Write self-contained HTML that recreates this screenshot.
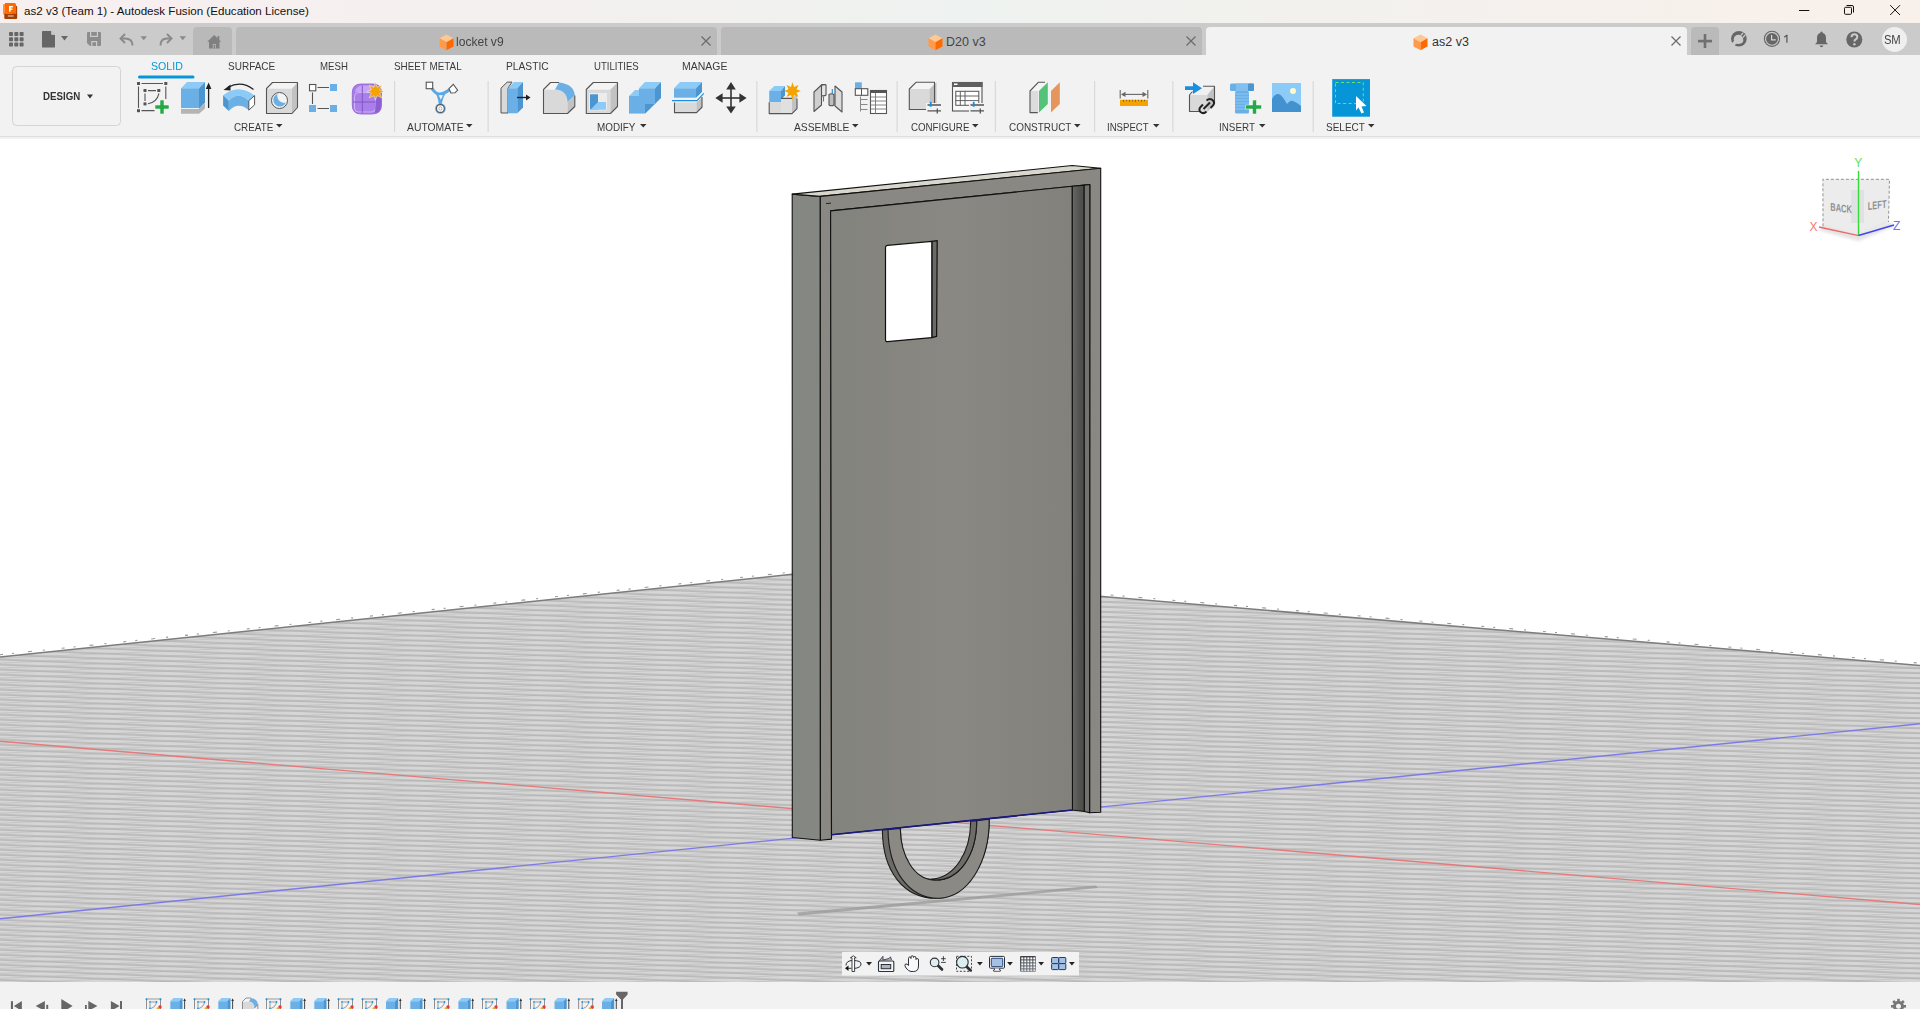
<!DOCTYPE html>
<html><head><meta charset="utf-8">
<style>
*{margin:0;padding:0;box-sizing:border-box}
html,body{width:1920px;height:1009px;overflow:hidden;background:#fff;font-family:"Liberation Sans",sans-serif}
.a{position:absolute}
#title{left:0;top:0;width:1920px;height:23px;background:linear-gradient(90deg,#f9efef 0%,#f3f0ef 30%,#eef2f0 50%,#f3f1ee 70%,#f9f0ea 100%)}
#title .t{left:24px;top:4px;font-size:11.6px;color:#111;white-space:nowrap}
#tabs{left:0;top:23px;width:1920px;height:32px;background:#cbcbcb}
.tab{top:4px;height:28px;background:#bdbdbd;border-radius:4px 4px 0 0}
.tab .tt{position:absolute;top:8px;font-size:12.5px;color:#444;white-space:nowrap}
#tb{left:0;top:55px;width:1920px;height:84px;background:#f2f2f2;border-top:0}
#tbl{left:0;top:136px;width:1920px;height:1px;background:#dedede}
.tl{position:absolute;top:5px;font-size:11px;color:#3c3c3c;white-space:nowrap;letter-spacing:0px}
.lb{position:absolute;font-size:10.8px;line-height:12px;color:#3a3a3a;white-space:nowrap;transform-origin:left top}
.gl{position:absolute;top:67px;font-size:10.5px;color:#3c3c3c;white-space:nowrap}
.sep{position:absolute;top:27px;width:1px;height:50px;background:#d6d6d6}
#vp{left:0;top:139px;width:1920px;height:844px;background:#fff;overflow:hidden}
#bot{left:0;top:982px;width:1920px;height:27px;background:#f2f2f2}
</style></head><body>
<div id="title" class="a">
  <svg class="a" style="left:0;top:0" width="20" height="22" viewBox="0 0 20 22">
    <rect x="3" y="4" width="4" height="10.6" rx="1" fill="#ff8c3c"/>
    <rect x="12" y="5.8" width="5.1" height="13" rx="0.8" fill="#b24800"/>
    <rect x="4.3" y="13.4" width="12.8" height="5.5" rx="0.8" fill="#a33f00"/>
    <path d="M5,3 H14.5 Q16,3 16,4.5 V13.7 H5 Z" fill="#ff6a00"/>
    <path d="M9,5.9 H12.9 V7.4 H10.6 V8.4 H12.5 V9.8 H10.6 V11.8 H9 Z" fill="#fff"/>
    <rect x="7.8" y="15.2" width="5.8" height="1.6" fill="#d9b8a6" opacity="0.8"/>
  </svg>
  <div class="a t">as2 v3 (Team 1) - Autodesk Fusion (Education License)</div>
  <svg class="a" style="left:1790px;top:0" width="130" height="23" viewBox="1790 0 130 23" fill="none" stroke="#111" stroke-width="1">
    <path d="M1799,10.5 H1809.3"/>
    <rect x="1844.5" y="7.3" width="7" height="7" rx="1"/>
    <path d="M1846.5,5.5 H1852 Q1853.5,5.5 1853.5,7 V12.5"/>
    <path d="M1890.2,5.2 L1900,15 M1900,5.2 L1890.2,15"/>
  </svg>
</div>
<div id="tabs" class="a">
  <svg class="a" style="left:9px;top:9px" width="15" height="15" viewBox="0 0 15 15" fill="#666">
    <rect x="0" y="0" width="4" height="4" rx="0.8"/><rect x="5.3" y="0" width="4" height="4" rx="0.8"/><rect x="10.6" y="0" width="4" height="4" rx="0.8"/>
    <rect x="0" y="5.3" width="4" height="4" rx="0.8"/><rect x="5.3" y="5.3" width="4" height="4" rx="0.8"/><rect x="10.6" y="5.3" width="4" height="4" rx="0.8"/>
    <rect x="0" y="10.6" width="4" height="4" rx="0.8"/><rect x="5.3" y="10.6" width="4" height="4" rx="0.8"/><rect x="10.6" y="10.6" width="4" height="4" rx="0.8"/>
  </svg>
  <svg class="a" style="left:42px;top:8px" width="28" height="17" viewBox="0 0 28 17">
    <path d="M0.8,0 H9.5 L13,3.5 V15.7 Q13,16.6 12.1,16.6 H0.9 Q0,16.6 0,15.7 V0.9 Q0,0 0.8,0 Z" fill="#666"/>
    <path d="M9.8,0 L13,3.2 H9.8 Z" fill="#cbcbcb"/>
    <path d="M9.6,-0.5 V3.4 H13.5" fill="none" stroke="#cbcbcb" stroke-width="0.9"/>
    <path d="M19,5 H26 L22.5,9.5 Z" fill="#666"/>
  </svg>
  <svg class="a" style="left:87px;top:9px" width="15" height="15" viewBox="0 0 15 15">
    <path d="M1,0 H13 Q14,0 14,1 V13 Q14,14 13,14 H3 L0,11 V1 Q0,0 1,0 Z" fill="#8c8c8c"/>
    <rect x="3" y="0" width="8" height="5" fill="#cbcbcb"/>
    <rect x="4.2" y="-1" width="5.6" height="4.8" fill="#8c8c8c"/>
    <rect x="4.2" y="9" width="6" height="5" fill="#cbcbcb"/>
    <rect x="5.4" y="10.2" width="3.6" height="3.8" fill="#8c8c8c"/>
  </svg>
  <svg class="a" style="left:119px;top:10px" width="70" height="14" viewBox="0 0 70 14" fill="none" stroke="#8a8a8a" stroke-width="1.9">
    <path d="M6,1 L1.5,5.5 L6,10"/><path d="M1.8,5.5 H6 Q13.5,5.5 13.5,12.5"/>
    <path d="M21.5,3.3 H28 L24.75,7.3 Z" fill="#8a8a8a" stroke="none"/>
    <path d="M48,1 L52.5,5.5 L48,10"/><path d="M52.2,5.5 H48 Q41.5,5.5 41.5,12.5"/>
    <path d="M60.5,3.3 H67 L63.75,7.3 Z" fill="#8a8a8a" stroke="none"/>
  </svg>
  <div class="tab a" style="left:193px;width:39px;background:#b9b9b9">
    <svg class="a" style="left:14px;top:8px" width="15" height="14" viewBox="0 0 15 14" fill="#808080">
      <path d="M7.2,0 L14.2,6.8 H12.5 V13.5 H2 V6.8 H0.2 Z"/><rect x="10.5" y="1" width="1.8" height="4"/>
      <rect x="5.8" y="9" width="3" height="4.5" fill="#b9b9b9"/><rect x="6.6" y="9.8" width="1.4" height="3.7" fill="#808080"/>
    </svg>
  </div>
  <div class="tab a" style="left:236px;width:481px;background:#bababa">
    <svg class="a" style="left:203px;top:7px" width="15" height="17" viewBox="0 0 15 17">
      <path d="M7.5,0.5 L14.5,4.3 L7.5,8.2 L0.5,4.3 Z" fill="#ffc793"/>
      <path d="M0.5,4.3 L7.5,8.2 V16.2 L0.5,12.4 Z" fill="#ff9a4a"/>
      <path d="M14.5,4.3 L7.5,8.2 V16.2 L14.5,12.4 Z" fill="#ff6a00"/>
    </svg>
    <div class="tt" style="left:220px;transform:scaleX(0.965);transform-origin:left">locket v9</div>
    <svg class="a" style="left:465px;top:9px" width="10" height="10" viewBox="0 0 10 10" stroke="#6a6a6a" stroke-width="1.2"><path d="M0.5,0.5 L9.5,9.5 M9.5,0.5 L0.5,9.5"/></svg>
  </div>
  <div class="tab a" style="left:721px;width:481px;background:#bababa">
    <svg class="a" style="left:207px;top:7px" width="15" height="17" viewBox="0 0 15 17">
      <path d="M7.5,0.5 L14.5,4.3 L7.5,8.2 L0.5,4.3 Z" fill="#ffc793"/>
      <path d="M0.5,4.3 L7.5,8.2 V16.2 L0.5,12.4 Z" fill="#ff9a4a"/>
      <path d="M14.5,4.3 L7.5,8.2 V16.2 L14.5,12.4 Z" fill="#ff6a00"/>
    </svg>
    <div class="tt" style="left:225px">D20 v3</div>
    <svg class="a" style="left:465px;top:9px" width="10" height="10" viewBox="0 0 10 10" stroke="#6a6a6a" stroke-width="1.2"><path d="M0.5,0.5 L9.5,9.5 M9.5,0.5 L0.5,9.5"/></svg>
  </div>
  <div class="tab a" style="left:1206px;width:481px;background:#f2f2f2">
    <svg class="a" style="left:207px;top:7px" width="15" height="17" viewBox="0 0 15 17">
      <path d="M7.5,0.5 L14.5,4.3 L7.5,8.2 L0.5,4.3 Z" fill="#ffc793"/>
      <path d="M0.5,4.3 L7.5,8.2 V16.2 L0.5,12.4 Z" fill="#ff9a4a"/>
      <path d="M14.5,4.3 L7.5,8.2 V16.2 L14.5,12.4 Z" fill="#ff6a00"/>
    </svg>
    <div class="tt" style="left:226px;color:#333">as2 v3</div>
    <svg class="a" style="left:465px;top:9px" width="10" height="10" viewBox="0 0 10 10" stroke="#6a6a6a" stroke-width="1.2"><path d="M0.5,0.5 L9.5,9.5 M9.5,0.5 L0.5,9.5"/></svg>
  </div>
  <div class="tab a" style="left:1691px;width:28px;background:#bababa">
    <svg class="a" style="left:7px;top:7px" width="14" height="14" viewBox="0 0 14 14" fill="#707070"><rect x="0" y="5.8" width="14" height="2.6"/><rect x="5.7" y="0" width="2.6" height="14"/></svg>
  </div>
  <svg class="a" style="left:1730px;top:7px" width="18" height="18" viewBox="1730 30 18 18">
    <circle cx="1738.9" cy="38.8" r="7.8" fill="#666"/>
    <circle cx="1738.3" cy="39.4" r="4.6" fill="#cbcbcb"/>
    <path d="M1736.5,38.5 L1731,44 L1733.5,46.5 L1739,41 Z" fill="#cbcbcb"/>
    <path d="M1740.6,35.6 L1743,33 M1742.6,37.6 L1745.2,35" stroke="#cbcbcb" stroke-width="1.3"/>
    <path d="M1735,37 Q1737,34.5 1740,35.5 L1743,38.5 Q1744,41.5 1741.5,43.5 Z" fill="#cbcbcb"/>
  </svg>
  <svg class="a" style="left:1763px;top:7px" width="18" height="18" viewBox="1763 30 18 18">
    <circle cx="1772" cy="38.8" r="7.6" fill="none" stroke="#666" stroke-width="1.1"/>
    <circle cx="1772" cy="38.8" r="5.9" fill="#666"/>
    <path d="M1771.6,35 V39.9 H1775.8" fill="none" stroke="#d6d6d6" stroke-width="1.2"/>
  </svg>
  <svg class="a" style="left:1782px;top:10px" width="8" height="10" viewBox="1782 33 8 10"><path d="M1786.9,34.9 V42.8" stroke="#555" stroke-width="1.2"/><path d="M1784.2,37.3 L1787.2,35" stroke="#555" stroke-width="1.1"/></svg>
  <svg class="a" style="left:1814px;top:8px" width="15" height="17" viewBox="0 0 15 17" fill="#666">
    <path d="M7.5,0.5 C8.5,0.5 8.7,1.5 8.7,2 C11.5,2.8 12,5 12,7.5 V11 L14,13.3 H1 L3,11 V7.5 C3,5 3.5,2.8 6.3,2 C6.3,1.5 6.5,0.5 7.5,0.5 Z"/>
    <path d="M5.5,14.5 H9.5 Q9,16.3 7.5,16.3 Q6,16.3 5.5,14.5 Z"/>
  </svg>
  <svg class="a" style="left:1846px;top:8px" width="17" height="17" viewBox="0 0 17 17">
    <circle cx="8.3" cy="8.5" r="8" fill="#666"/>
    <path d="M5.5,6.2 Q5.5,3.3 8.4,3.3 Q11.3,3.3 11.3,6 Q11.3,7.6 9.5,8.5 Q8.4,9.1 8.4,10.5" fill="none" stroke="#cbcbcb" stroke-width="2"/>
    <circle cx="8.4" cy="13.2" r="1.2" fill="#cbcbcb"/>
  </svg>
  <div class="a" style="left:1882px;top:3.5px;width:25px;height:25px;border-radius:50%;background:#efefef"></div>
  <div class="a" style="left:1884.3px;top:10px;font-size:12.5px;color:#444;letter-spacing:-0.3px;transform:scaleX(0.9);transform-origin:left">SM</div>
</div>

<div id="tb" class="a">
<svg class="a" style="left:0;top:0" width="1400" height="82" viewBox="0 55 1400 82">
<defs>
<linearGradient id="frm" x1="0" y1="0" x2="1" y2="1"><stop offset="0" stop-color="#c8a6f6"/><stop offset="1" stop-color="#9b6ee0"/></linearGradient>
</defs>
<!-- SOLID underline -->
<rect x="138" y="75.5" width="56.5" height="3" rx="1.5" fill="#0696d7"/>
<!-- design box -->
<rect x="12.5" y="66.5" width="108" height="59" rx="4" fill="#f2f2f2" stroke="#d4d4d4" stroke-width="1"/>
<!-- separators -->
<g fill="#d9d9d9">
<rect x="394" y="81" width="1.2" height="51"/><rect x="487.5" y="81" width="1.2" height="51"/><rect x="756.3" y="81" width="1.2" height="51"/>
<rect x="896.5" y="81" width="1.2" height="51"/><rect x="994.8" y="81" width="1.2" height="51"/><rect x="1094" y="81" width="1.2" height="51"/>
<rect x="1172.3" y="81" width="1.2" height="51"/><rect x="1312.6" y="81" width="1.2" height="51"/>
</g>
<!-- 1 sketch -->
<g>
<g stroke="#555" stroke-width="1.1" fill="none">
<path d="M141.5,83.5 H163 M138.5,86.5 V108 M165.8,86.5 V99 M141.5,110.6 H154.5"/>
<path d="M148,90.6 H156 M145,93.5 V101 M148,103.8 Q157,102 159,93.3"/>
</g>
<g fill="#555">
<rect x="137" y="82" width="3" height="3"/><rect x="164.3" y="82" width="3" height="3"/><rect x="137" y="109.2" width="3" height="3"/>
<rect x="143.5" y="89" width="3" height="3"/><rect x="157.3" y="89" width="3" height="3"/><rect x="143.5" y="102.4" width="3" height="3"/>
</g>
<path d="M160,100 H164 V105 H169 V109 H164 V114 H160 V109 H155 V105 H160 Z" fill="#22aa44" stroke="#f2f2f2" stroke-width="0.6"/>
</g>
<!-- 2 extrude -->
<g>
<polygon points="181,108.5 199,108.5 205,103 205,108.5 199,113.8 181,113.8" fill="#b4b4b4"/>
<polygon points="181,88.2 199,88.2 199,108.5 181,108.5" fill="#6ab0e6"/>
<polygon points="181,88.2 187,82 205,82 199,88.2" fill="#8ccbf8"/>
<polygon points="199,88.2 205,82 205,102.5 199,108.5" fill="#4b95d1"/>
<line x1="181" y1="108.5" x2="199" y2="108.5" stroke="#fff" stroke-width="0.8"/>
<path d="M208.6,108 V86" stroke="#222" stroke-width="1.3"/>
<path d="M205.8,89 L208.6,82.6 L211.4,89 Z" fill="#222"/>
</g>
<!-- 3 revolve -->
<g>
<path d="M253.5,89.5 Q241,80 228,87.5" fill="none" stroke="#222" stroke-width="1.2"/>
<path d="M223.5,90 L230.5,84.5 L230.5,90.5 Z" fill="#222"/>
<path d="M223.1,95.3 Q238,83 254.6,95.5 L248.8,100.7 Q238,91 228.8,100.8 Z" fill="#8ccbf8"/>
<path d="M228.8,100.8 Q238,91 248.8,100.7 L248.8,110 Q238,101 228.8,110.9 Z" fill="#6ab0e6"/>
<path d="M223.1,95.3 L228.8,100.8 L228.8,110.9 L223.1,105.5 Z" fill="#4b95d1"/>
<path d="M248.8,100.7 L254.6,95.6 L254.6,104.8 L248.8,110.2 Z" fill="#fff" stroke="#555" stroke-width="1"/>
</g>
<!-- 4 hole -->
<g stroke-linejoin="round">
<polygon points="266.5,88.5 292,88.5 292,113.5 266.5,113.5" fill="#d9d9d9"/>
<polygon points="266.5,88.5 272.5,82.5 297.5,82.5 292,88.5" fill="#f4f4f4"/>
<polygon points="292,88.5 297.5,82.5 297.5,107.5 292,113.5" fill="#c2c2c2"/>
<polygon points="266.5,88.5 272.5,82.5 297.5,82.5 297.5,107.5 292,113.5 266.5,113.5" fill="none" stroke="#555" stroke-width="1.1"/>
<circle cx="279.5" cy="100.5" r="8" fill="#f4f4f4" stroke="#555" stroke-width="1"/>
<path d="M277.5,94 A6.5,6.5 0 1 0 285.8,102.6 A7,7 0 0 1 277.5,94 Z" fill="#6ab0e6"/>
</g>
<!-- 5 pattern -->
<g>
<rect x="309.5" y="84.5" width="6.3" height="6.3" fill="#fff" stroke="#555" stroke-width="1.1"/>
<rect x="330" y="84" width="7" height="7" fill="#6ab0e6"/><rect x="309" y="105" width="7" height="7" fill="#6ab0e6"/><rect x="330" y="105" width="7" height="7" fill="#6ab0e6"/>
<path d="M317.5,87.5 H329 M312.5,92.5 V104 M317.5,108.5 H329" stroke="#555" stroke-width="1.1"/>
</g>
<!-- 6 form -->
<g>
<path d="M361,84 H373 Q381.5,84 381.5,93 V105 Q381.5,114 372,114 H361 Q352.3,114 352.3,105 V93 Q352.3,84 361,84 Z" fill="#a77be8" stroke="#9566da" stroke-width="0.9"/>
<path d="M355,92 Q356,86 362,85.5 H373 Q379,86 380,92 Z" fill="#c6a3f6"/>
<rect x="354.5" y="92.5" width="21" height="19.5" rx="4" fill="#aa7fea" stroke="#cdb4f4" stroke-width="1"/>
<path d="M376,93 Q381,94 381,100 V105 Q381,112 375,113 Z" fill="#8d5fd3"/>
<path d="M353,102 H375.5 M362.3,85.5 V113" stroke="#7c55c0" stroke-width="0.9"/>
<path d="M375.5,82 L377,87.3 L381.8,85.2 L379.6,89.8 L384,91.5 L379.6,93.2 L381.8,97.8 L377,95.7 L375.5,100 L374,95.7 L369.2,97.8 L371.4,93.2 L367,91.5 L371.4,89.8 L369.2,85.2 L374,87.3 Z" fill="#f4a300" stroke="#f2f2f2" stroke-width="0.5"/>
</g>
<!-- 7 automate -->
<g>
<path d="M431,87 Q435,93.5 438.5,94 Q443,94.5 450,89.5" fill="none" stroke="#5aa9e6" stroke-width="3"/>
<path d="M437,93 Q439,97 440.4,105 M444.5,93 Q441.5,97 440.4,105" fill="none" stroke="#5aa9e6" stroke-width="2.6"/>
<path d="M438.9,95.2 H443 L440.8,99.8 Z" fill="#f2f2f2"/>
<rect x="426.2" y="82.2" width="6.5" height="6.5" fill="#fff" stroke="#555" stroke-width="1.1"/>
<path d="M453.3,84.3 L457.6,90.3 L455,92.7 L450.9,93 L449,88.7 Z" fill="#fff" stroke="#555" stroke-width="1.1"/>
<circle cx="440.4" cy="108.5" r="5.3" fill="#5aa9e6"/>
<circle cx="440.4" cy="108.5" r="3.9" fill="#fff" stroke="#555" stroke-width="1.1"/>
<circle cx="440.4" cy="108.5" r="1.6" fill="none" stroke="#888" stroke-width="0.6"/>
</g>
<!-- 8 press pull -->
<g>
<polygon points="501,88.2 507.2,82.1 512,82.1 508,88.2 508,113 501,113" fill="#d9d9d9" stroke="#555" stroke-width="1"/>
<polygon points="508,88.2 517.3,88.2 517.3,113.3 508,113.3" fill="#6ab0e6"/>
<polygon points="508,88.2 514,82.1 523,82.1 517.3,88.2" fill="#8ccbf8"/>
<polygon points="517.3,88.2 523,82.1 523,107.5 517.3,113.3" fill="#4b95d1"/>
<path d="M517,97.5 H527" stroke="#222" stroke-width="1.4"/><path d="M526,94.5 L530.5,97.5 L526,100.5 Z" fill="#222"/>
</g>
<!-- 9 fillet -->
<g stroke-linejoin="round">
<path d="M543.5,89.5 H555 Q567.5,90 567.5,102 V113.5 H543.5 Z" fill="#d9d9d9"/>
<path d="M543.5,89.5 L550.5,82.5 H559 L555,89.5 Z" fill="#f4f4f4"/>
<path d="M555,89.5 L559,82.5 Q574,84 574.8,95.5 L567.5,102 Q567,90 555,89.5 Z" fill="#6ab0e6"/>
<path d="M567.5,102 L574.8,95.5 V106.5 L567.5,113.5 Z" fill="#c2c2c2"/>
<path d="M559,82.5 H550.5 L543.5,89.5 V113.5 H567.5 L574.8,106.5 V95.5" fill="none" stroke="#555" stroke-width="1.1"/>
</g>
<!-- 10 shell -->
<g stroke-linejoin="round">
<polygon points="586.3,89.5 610.5,89.5 610.5,113.5 586.3,113.5" fill="#d9d9d9"/>
<polygon points="586.3,89.5 593.3,82.5 617.5,82.5 610.5,89.5" fill="#f4f4f4"/>
<polygon points="610.5,89.5 617.5,82.5 617.5,106.5 610.5,113.5" fill="#c2c2c2"/>
<polygon points="586.3,89.5 593.3,82.5 617.5,82.5 617.5,106.5 610.5,113.5 586.3,113.5" fill="none" stroke="#555" stroke-width="1.1"/>
<rect x="589" y="93" width="18" height="17.5" fill="#ececec"/>
<rect x="590" y="94.3" width="8" height="15.2" fill="#4b95d1"/>
<path d="M590.4,109.8 L598,102 H606 V109.8 Z" fill="#8ccbf8"/>
</g>
<!-- 11 combine -->
<g>
<polygon points="629,96 645,96 645,113.6 629,113.6" fill="#6ab0e6"/>
<polygon points="629,96 635,90 651,90 645,96" fill="#8ccbf8"/>
<polygon points="639,88.2 655,88.2 655,104 639,104" fill="#6ab0e6"/>
<polygon points="639,88.2 645,82.1 661,82.1 655,88.2" fill="#8ccbf8"/>
<polygon points="655,88.2 661,82.1 661,98 655,104" fill="#4b95d1"/>
<polygon points="645,104 655,104 645,113.6" fill="#4b95d1"/>
<polygon points="645,104 651,104 651,107.5 645,113.6" fill="#4b95d1"/>
</g>
<!-- 12 split -->
<g>
<polygon points="674,88.2 696,88.2 696,97.7 674,97.7" fill="#6ab0e6"/>
<polygon points="674,88.2 680,82.1 702,82.1 696,88.2" fill="#8ccbf8"/>
<polygon points="696,88.2 702,82.1 702,92 696,97.7" fill="#4b95d1"/>
<path d="M672,100.6 H697 L703.8,93.3" fill="none" stroke="#1a8fe0" stroke-width="1.1"/>
<polygon points="674.5,102.5 696.5,102.5 696.5,112.6 674.5,112.6" fill="#d9d9d9"/>
<polygon points="696.5,102.5 702,97 702,107.2 696.5,112.6" fill="#c2c2c2"/>
<path d="M674.5,102.5 V112.6 H696.5 L702,107.2 V97" fill="none" stroke="#555" stroke-width="1.1"/>
</g>
<!-- 13 move -->
<g fill="#333">
<rect x="730.2" y="88" width="1.6" height="20"/><rect x="721" y="97.2" width="20" height="1.6"/>
<path d="M726.2,89.6 L731,82.1 L735.8,89.6 Z M726.2,106.4 L731,113.6 L735.8,106.4 Z M722.6,93.2 L715.3,98 L722.6,102.8 Z M739.4,93.2 L746.6,98 L739.4,102.8 Z"/>
</g>
<!-- 14 new component -->
<g stroke-linejoin="round">
<polygon points="769.2,91 781,91 781,102.2 769.2,102.2" fill="#6ab0e6"/>
<polygon points="769.2,91 774.3,86 785,86 781,91" fill="#8ccbf8"/>
<polygon points="781,91 785,86 785,98 781,102.2" fill="#4b95d1"/>
<polygon points="769.2,102.2 781,102.2 781,113.6 769.2,113.6" fill="#d9d9d9"/>
<polygon points="782,98.4 787,93.6 797,93.6 792,98.4" fill="#f4f4f4"/>
<polygon points="781,98.4 792,98.4 792,113.6 781,113.6" fill="#e0e0e0"/>
<polygon points="792,98.4 797,93.6 797,108.6 792,113.6" fill="#c2c2c2"/>
<path d="M769.2,102.2 V113.6 H792 L797,108.6 V98.5 M781,98.4 H792" fill="none" stroke="#555" stroke-width="1.1"/>
<path d="M792.5,82 L794,87 L798.5,85 L796.5,89.3 L800.8,91 L796.5,92.7 L798.5,97 L794,95 L792.5,100 L791,95 L786.5,97 L788.5,92.7 L784.2,91 L788.5,89.3 L786.5,85 L791,87 Z" fill="#f4a300"/>
</g>
<!-- 15 joint -->
<g stroke="#555" stroke-width="1.1" stroke-linejoin="round">
<path d="M814,92 L822,84.5 H825.5 V95 L821.5,96 V105 L814,111.5 Z" fill="#cfcfcf"/>
<path d="M821.5,85.5 Q823.5,84 826,85 V95 Q824,96.5 821.5,95.5 Z" fill="#e6e6e6"/>
<path d="M835,86 L842,92 V112 L835,106 Z" fill="#dcdcdc"/>
<path d="M829,94.5 Q831.5,93 834,94.5 V105 Q831.5,106.5 829,105 Z" fill="#bfbfbf"/>
</g>
<path d="M823.5,96.5 V101.5 M832.3,89 V94" stroke="#1a8fe0" stroke-width="1.1"/>
<!-- 16 bom -->
<g>
<rect x="855" y="82.3" width="6.8" height="6.8" fill="#6ab0e6"/>
<rect x="855.3" y="88.7" width="12.5" height="6.6" fill="#fff" stroke="#555" stroke-width="1.1"/>
<path d="M861.5,88.7 V95.3" stroke="#555" stroke-width="1"/>
<path d="M860.5,96.5 V111.5 M860.5,99.5 H867.5 M860.5,104.5 H867.5 M860.5,109.5 H867.5" stroke="#888" stroke-width="1"/>
<rect x="870.5" y="90.5" width="16" height="23" fill="#fff" stroke="#555" stroke-width="1.1"/>
<rect x="870" y="90" width="17" height="3" fill="#555"/>
<path d="M870.5,97 H886.5 M870.5,101 H886.5 M870.5,105 H886.5 M870.5,109 H886.5 M875.5,93 V113.5" stroke="#777" stroke-width="0.9"/>
</g>
<!-- 17 configure box -->
<g stroke-linejoin="round">
<polygon points="909.3,89 929.5,89 929.5,109.5 909.3,109.5" fill="#d9d9d9"/>
<polygon points="909.3,89 916,82.3 936.5,82.3 929.5,89" fill="#f4f4f4"/>
<polygon points="929.5,89 936.5,82.3 936.5,104 929.5,109.5" fill="#c2c2c2"/>
<path d="M934.5,105 V82.3 H916 L909.3,89 V109.5 H926" fill="none" stroke="#555" stroke-width="1.1"/>
<rect x="926" y="103" width="15.5" height="11" fill="#f2f2f2"/>
<path d="M927.5,105 H941 M927.5,110.8 H941 M937.3,108.5 V113.5" stroke="#555" stroke-width="1.3"/>
<rect x="929.8" y="101.8" width="1.8" height="5" fill="#1a8fe0"/>
</g>
<!-- 18 configure table -->
<g>
<rect x="952.5" y="82.5" width="29.5" height="28.5" fill="#f8f8f8" stroke="#555" stroke-width="1.1"/>
<rect x="952" y="82" width="30.5" height="5" fill="#5f5f5f"/>
<rect x="954" y="83.5" width="3.5" height="1.5" fill="#fff"/>
<rect x="955.8" y="91.3" width="23" height="14" fill="#fff" stroke="#555" stroke-width="1"/>
<path d="M960.3,91.3 V105.3 M965,91.3 V105.3 M955.8,96 H978.8 M955.8,100.6 H978.8" stroke="#555" stroke-width="0.9"/>
<rect x="969" y="103" width="15.5" height="11" fill="#f2f2f2"/>
<path d="M970.5,105 H984 M970.5,110.8 H984 M980.3,108.5 V113.5" stroke="#555" stroke-width="1.3"/>
<rect x="972.8" y="101.8" width="1.8" height="5" fill="#1a8fe0"/>
</g>
<!-- 19 construct -->
<g stroke-linejoin="round">
<polygon points="1030,91 1038.3,91 1038.3,112.6 1030,112.6" fill="#dcdcdc"/>
<polygon points="1030,91 1038.5,82.2 1045,82.2 1038.3,91" fill="#f4f4f4"/>
<path d="M1045,82.2 H1038.5 L1030,91 V112.6 H1037.8" fill="none" stroke="#555" stroke-width="1.1"/>
<polygon points="1039,91 1047.8,82.2 1047.8,104 1039,112.6" fill="#55c27a"/>
<polygon points="1051,91 1059.8,82.2 1059.8,104 1051,112.6" fill="#e3965e"/>
</g>
<!-- 20 inspect -->
<g>
<path d="M1120.2,90 V98.4 M1147.8,90 V98.4" stroke="#666" stroke-width="1.1"/>
<path d="M1122,94.4 H1146" stroke="#666" stroke-width="1.1"/>
<path d="M1121,94.4 L1125.5,91.8 V97 Z M1147,94.4 L1142.5,91.8 V97 Z" fill="#666"/>
<rect x="1120" y="99.8" width="28" height="6.2" fill="#f5a300"/>
<path d="M1123.5,99.8 V102 M1126.5,99.8 V101.3 M1129.5,99.8 V102 M1132.5,99.8 V101.3 M1135.5,99.8 V102 M1138.5,99.8 V101.3 M1141.5,99.8 V102 M1144.5,99.8 V101.3" stroke="#6b5a2a" stroke-width="0.8"/>
</g>
<!-- 21 insert derive -->
<g stroke-linejoin="round">
<polygon points="1189.5,95 1207.3,95 1207.3,112 1189.5,112" fill="#d9d9d9"/>
<polygon points="1189.5,95 1196,86.3 1214.5,86.3 1207.3,95" fill="#f0f0f0"/>
<polygon points="1207.3,95 1214.5,86.3 1214.5,104 1207.3,112" fill="#c2c2c2"/>
<path d="M1192.5,91.5 L1189.5,95 V111.5 H1200 M1203,86.3 H1214.5 V103" fill="none" stroke="#555" stroke-width="1.1"/>
<path d="M1185,86.3 H1193 V82.2 L1202,88.2 L1193,94 V90 H1185 Z" fill="#1a8fe0"/>
<path d="M1206.5,100.5 Q1210,97.5 1213,100.5 Q1215.5,103 1212.5,106 L1210.5,108 M1203,104.5 L1201,106.5 Q1198,109.5 1200.5,112 Q1203.5,114.5 1206.5,111.5 M1203.5,109 L1210,102.5" fill="none" stroke="#222" stroke-width="2"/>
</g>
<!-- 22 bolt -->
<g>
<rect x="1230" y="83.5" width="24" height="7.5" rx="1.5" fill="#6ab0e6"/>
<rect x="1236" y="83.5" width="12" height="7.5" fill="#7fc0f0"/>
<rect x="1248" y="83.5" width="6" height="7.5" rx="1" fill="#4b95d1"/>
<rect x="1235" y="91" width="14" height="22.5" rx="1.5" fill="#6ab0e6"/>
<path d="M1235,94 H1249 M1235,97 H1249 M1235,100 H1249 M1235,103 H1249 M1235,106 H1249 M1235,109 H1249" stroke="#8ccbf8" stroke-width="0.9"/>
<path d="M1252.8,100 H1256.5 V105 H1261.5 V109 H1256.5 V114 H1252.5 V109 H1245.5 V105 H1252.5 Z" fill="#22aa44" stroke="#f2f2f2" stroke-width="0.6"/>
</g>
<!-- 23 image -->
<g>
<rect x="1272" y="83" width="29" height="29" fill="#8ccbf8"/>
<path d="M1272,99 Q1276,92 1280.5,95 Q1283,97 1287,104 Q1290,100 1293,101 Q1298,103 1301,106 V112 H1272 Z" fill="#4391cf"/>
<circle cx="1293" cy="91" r="3" fill="#fdfbc8"/>
</g>
<!-- 24 select -->
<g>
<rect x="1332.2" y="79.1" width="37.8" height="37.6" fill="#0696d7"/>
<rect x="1335.5" y="82.5" width="27.8" height="21" fill="none" stroke="#6fe070" stroke-width="1" stroke-dasharray="3,2.5"/>
<path d="M1356,96 L1366.5,106 L1361.5,106.5 L1364,112.5 L1361.5,113.5 L1358.5,107.5 L1356,110.5 Z" fill="#fff"/>
</g>
</svg>

<div class="lb" style="left:150.90px;top:5px;color:#0696d7;transform:scaleX(0.981)">SOLID</div>
<div class="lb" style="left:227.60px;top:5px;color:#3a3a3a;transform:scaleX(0.927)">SURFACE</div>
<div class="lb" style="left:320.40px;top:5px;color:#3a3a3a;transform:scaleX(0.894)">MESH</div>
<div class="lb" style="left:393.90px;top:5px;color:#3a3a3a;transform:scaleX(0.914)">SHEET METAL</div>
<div class="lb" style="left:506.40px;top:5px;color:#3a3a3a;transform:scaleX(0.947)">PLASTIC</div>
<div class="lb" style="left:594.40px;top:5px;color:#3a3a3a;transform:scaleX(0.886)">UTILITIES</div>
<div class="lb" style="left:682.40px;top:5px;color:#3a3a3a;transform:scaleX(0.970)">MANAGE</div>
<div class="lb" style="left:233.60px;top:66px;transform:scaleX(0.912)">CREATE</div>
<svg class="a" style="left:276px;top:69px" width="7" height="4" viewBox="0 0 7 4"><path d="M0,0 H6.5 L3.25,3.6 Z" fill="#333"/></svg>
<div class="lb" style="left:407.40px;top:66px;transform:scaleX(0.960)">AUTOMATE</div>
<svg class="a" style="left:466px;top:69px" width="7" height="4" viewBox="0 0 7 4"><path d="M0,0 H6.5 L3.25,3.6 Z" fill="#333"/></svg>
<div class="lb" style="left:596.90px;top:66px;transform:scaleX(0.914)">MODIFY</div>
<svg class="a" style="left:640px;top:69px" width="7" height="4" viewBox="0 0 7 4"><path d="M0,0 H6.5 L3.25,3.6 Z" fill="#333"/></svg>
<div class="lb" style="left:793.65px;top:66px;transform:scaleX(0.952)">ASSEMBLE</div>
<svg class="a" style="left:852px;top:69px" width="7" height="4" viewBox="0 0 7 4"><path d="M0,0 H6.5 L3.25,3.6 Z" fill="#333"/></svg>
<div class="lb" style="left:910.65px;top:66px;transform:scaleX(0.901)">CONFIGURE</div>
<svg class="a" style="left:972px;top:69px" width="7" height="4" viewBox="0 0 7 4"><path d="M0,0 H6.5 L3.25,3.6 Z" fill="#333"/></svg>
<div class="lb" style="left:1008.65px;top:66px;transform:scaleX(0.921)">CONSTRUCT</div>
<svg class="a" style="left:1074px;top:69px" width="7" height="4" viewBox="0 0 7 4"><path d="M0,0 H6.5 L3.25,3.6 Z" fill="#333"/></svg>
<div class="lb" style="left:1107.40px;top:66px;transform:scaleX(0.890)">INSPECT</div>
<svg class="a" style="left:1153px;top:69px" width="7" height="4" viewBox="0 0 7 4"><path d="M0,0 H6.5 L3.25,3.6 Z" fill="#333"/></svg>
<div class="lb" style="left:1219.40px;top:66px;transform:scaleX(0.911)">INSERT</div>
<svg class="a" style="left:1259px;top:69px" width="7" height="4" viewBox="0 0 7 4"><path d="M0,0 H6.5 L3.25,3.6 Z" fill="#333"/></svg>
<div class="lb" style="left:1326.40px;top:66px;transform:scaleX(0.926)">SELECT</div>
<svg class="a" style="left:1368px;top:69px" width="7" height="4" viewBox="0 0 7 4"><path d="M0,0 H6.5 L3.25,3.6 Z" fill="#333"/></svg>
<div class="a" style="left:43.3px;top:35px;font-size:11.3px;font-weight:bold;color:#333;transform:scaleX(0.86);transform-origin:left">DESIGN</div>
<svg class="a" style="left:87px;top:38.5px" width="7" height="5" viewBox="0 0 7 5"><path d="M0,0.5 H6 L3,4.5 Z" fill="#333"/></svg>
</div>
<div id="tbl" class="a"></div>
<div id="vp" class="a">
<svg class="a" style="left:0;top:0" width="1920" height="844" viewBox="0 139 1920 844">
<defs>
<pattern id="gp" patternUnits="userSpaceOnUse" width="200" height="5" patternTransform="rotate(2.2)">
<rect width="200" height="5" fill="#d6d6d6"/>
<rect y="3.4" width="200" height="1.4" fill="#b2b2b2"/>
</pattern>
<pattern id="gp2" patternUnits="userSpaceOnUse" width="200" height="5" patternTransform="rotate(-2.4) translate(0,2)">
<rect y="0" width="200" height="1.1" fill="#b4b4b4"/>
</pattern>
<linearGradient id="pf" x1="0" y1="0" x2="1" y2="0">
<stop offset="0" stop-color="#83837d"/><stop offset="0.5" stop-color="#898882"/><stop offset="1" stop-color="#82817b"/>
</linearGradient>
<linearGradient id="ds" x1="0" y1="0" x2="1" y2="0">
<stop offset="0" stop-color="#686864"/><stop offset="0.6" stop-color="#525250"/><stop offset="1" stop-color="#4c4c4a"/>
</linearGradient>
<filter id="bl" x="-10%" y="-200%" width="120%" height="500%"><feGaussianBlur stdDeviation="1.5"/></filter>
</defs>
<polygon points="0,656.9 812.8,572.1 1920,665.4 1920,983 0,983" fill="url(#gp)"/>
<polygon points="0,656.9 812.8,572.1 1920,665.4 1920,983 0,983" fill="url(#gp2)" opacity="0.5"/>
<polyline points="0,656.9 812.8,572.1 1920,665.4" fill="none" stroke="#7c7c7c" stroke-width="1.5"/>
<polyline points="0,654.7 812.8,569.9 1920,663.2" fill="none" stroke="#9a9a9a" stroke-width="1.1" stroke-dasharray="3,9,2,14,4,11,2,17"/>
<line x1="0" y1="741.25" x2="1920" y2="904.5" stroke="#e67a7a" stroke-width="1.35"/>
<line x1="0" y1="918.8" x2="1920" y2="723.75" stroke="#7b7be8" stroke-width="1.35"/>
<!-- shadow -->
<filter id="bl2" x="-5%" y="-100%" width="110%" height="300%"><feGaussianBlur stdDeviation="0.7"/></filter>
<polygon points="797,912.5 1096,885.5 1098,888 799,915.5" fill="#999" opacity="0.75" filter="url(#bl2)"/>
<!-- U ring -->
<g stroke="#1c1c1c" stroke-width="1.1" stroke-linejoin="round">
<path d="M882.4,830 C882.6,872 904,898 936,898.3 C966,898 989.5,862 989.2,819.3 L976.7,820.6 C976.5,855 958,880 931,879.2 C912,878.5 900.5,856 900.3,828.5 Z" fill="#6c6b66"/>
<path d="M888,829.4 C888.5,871 909,898 938,898.3 C968,898 989.5,862 989.2,819.3 L976.7,820.6 C976.7,857 958,881 934,880 C914,879 900.7,856 900.3,828.5 Z" fill="#8a8984"/>
<path d="M970.7,821.2 L976.7,820.6 C976.7,857 958,881 934,880 L931,879.2 C955,878 970.5,852 970.7,821.2 Z" fill="#6d6c67"/>
</g>
<!-- panel -->
<g stroke="#111" stroke-width="1.1" stroke-linejoin="round">
<polygon points="792.2,194.1 820.3,196.4 820.4,840.3 792.3,837.5" fill="#858782"/>
<polygon points="792.2,194.1 1072.3,165.5 1100.7,168.2 820.3,196.4" fill="#d9d7cd"/>
<polygon points="820.3,196.4 1100.7,168.2 1100.7,812.3 1089.6,812.7 1089.8,184.5 830.6,210.9 831.5,839.1 820.4,840.3" fill="#898882"/>
<polygon points="830.6,210.9 1072.3,186.3 1072.5,810 831.5,834.7" fill="url(#pf)"/>
<polygon points="1072.3,186.3 1084.2,185.1 1084.4,811.5 1072.5,810" fill="url(#ds)"/>
<polygon points="1084.2,185.1 1089.8,184.5 1089.6,812.7 1084.4,811.5" fill="#72726e"/>
</g>
<line x1="831.5" y1="834.7" x2="1072.5" y2="810" stroke="#1a1a80" stroke-width="1.6"/>
<line x1="826" y1="203.5" x2="831" y2="203.2" stroke="#222" stroke-width="1"/>
<!-- window -->
<g stroke="#111" stroke-width="1.2" stroke-linejoin="round">
<polygon points="931.8,241.3 937.2,240.7 936.6,336.4 931.8,337.6" fill="#6a6b68"/>
<path d="M887.5,245.3 L931.8,241.3 L931.8,337.6 L887.5,341.6 Q885.5,341.8 885.5,339.8 L885.5,247.5 Q885.5,245.5 887.5,245.3 Z" fill="#fff"/>
</g>
<!-- viewcube -->
<g>
<polygon points="1822.9,179.3 1889.5,179.3 1888.5,222 1858.5,235.6 1823,226.3" fill="#ececec"/>
<polygon points="1823,226.3 1858.5,235.6 1888.5,222 1895,226 1858.5,241 1818,230" fill="#cfcfcf" opacity="0.6" filter="url(#bl)"/>
<polyline points="1823,226.3 1822.9,179.3 1889.5,179.3 1888.5,222" fill="none" stroke="#888" stroke-width="0.9" stroke-dasharray="3,2"/>
<rect x="1851" y="190" width="13" height="33" fill="#dcdde0" opacity="0.7"/>
<line x1="1858.5" y1="170.9" x2="1858.5" y2="235.6" stroke="#33dd33" stroke-width="1.4"/>
<line x1="1819" y1="227" x2="1858.5" y2="235.6" stroke="#ee6666" stroke-width="1.4"/>
<line x1="1858.5" y1="235.6" x2="1894" y2="225" stroke="#4444ee" stroke-width="1.6"/>
<text x="1854.3" y="167" font-size="12" fill="#5ee05e" font-family="Liberation Sans">Y</text>
<text x="1809.6" y="231.2" font-size="12" fill="#ff7474" font-family="Liberation Sans">X</text>
<text x="1893" y="230.2" font-size="12" fill="#6f6fff" font-family="Liberation Sans">Z</text>
<text x="0" y="0" font-size="11" font-weight="bold" fill="#8e9094" font-family="Liberation Sans" transform="translate(1830.3,210.5) scale(0.68,1) skewY(5)">BACK</text>
<text x="0" y="0" font-size="11" font-weight="bold" fill="#8e9094" font-family="Liberation Sans" transform="translate(1867.8,210) scale(0.68,1) skewY(-5)">LEFT</text>
</g>
</svg>
<svg class="a" style="left:842px;top:813px" width="237" height="24" viewBox="842 952 237 24">
<rect x="842" y="952" width="237" height="23.5" fill="#f2f2f2"/>
<!-- orbit -->
<g>
<path d="M846,965.5 Q846,960.5 853,960.5 Q861,960.5 861,964 Q861,968 853.5,968.5" fill="none" stroke="#2b3138" stroke-width="1"/>
<path d="M852,957.8 V971.5 H854.6 V957.8 H856.2 L853.3,955.8 L850.4,957.8 Z" fill="#fff" stroke="#2b3138" stroke-width="0.9"/>
<path d="M851.5,968.3 H847.5" stroke="#2b3138" stroke-width="1"/><path d="M845,968.3 L848.5,965.5 V971 Z" fill="#111"/>
<path d="M866.1,962 H872 L869.05,965.5 Z" fill="#222"/>
</g>
<!-- look at -->
<g>
<path d="M879,961 L883,956.3 V960 L889,958.5 L890.5,956.8 L891.5,960" fill="#aab0b8" stroke="#2b3138" stroke-width="0.8"/>
<rect x="878.5" y="961" width="15.3" height="10.5" rx="1" fill="#f6f6f6" stroke="#2b3138" stroke-width="1.1"/>
<rect x="881.2" y="964.5" width="9.5" height="4.2" fill="#aeb4bf" stroke="#2b3138" stroke-width="1"/>
</g>
<!-- pan -->
<path d="M906,968 Q904,965 905.5,964 Q907,963.5 908.5,965.5 V958.5 Q908.5,957 909.7,957 Q911,957 911,958.5 V956.7 Q911,955.8 912.2,955.8 Q913.5,955.8 913.5,957 V957.5 Q913.5,956.5 914.7,956.5 Q916,956.5 916,958 V959.5 Q916,958.5 917.2,958.5 Q918.5,958.5 918.5,960 V966 Q918.5,971.5 913.5,971.5 H911 Q909,971.5 906,968 Z" fill="#f8f8f8" stroke="#2b3138" stroke-width="1"/>
<!-- zoom -->
<g>
<path d="M938,965.5 L942,969.5" stroke="#2b3138" stroke-width="2.6" stroke-linecap="round"/>
<circle cx="934.6" cy="962.4" r="4.3" fill="#dfeeee" stroke="#2b3138" stroke-width="1.1"/>
<path d="M941,958.7 H945.8 M943.4,956.2 V961 M941,962.4 H945.8" stroke="#2b3138" stroke-width="0.9"/>
</g>
<!-- fit -->
<g>
<rect x="956.5" y="956.3" width="15" height="15" fill="none" stroke="#2b3138" stroke-width="0.9" stroke-dasharray="2,1.6"/>
<path d="M966,966 L970.3,970.3" stroke="#2b3138" stroke-width="2.8" stroke-linecap="round"/>
<circle cx="962.4" cy="962.2" r="5.8" fill="#dcefee" stroke="#2b3138" stroke-width="1.1"/>
<path d="M977,961.9 H982.8 L979.9,965.6 Z" fill="#222"/>
</g>
<!-- display -->
<g>
<rect x="989.5" y="956.4" width="15" height="11.8" rx="1" fill="#f4f4f4" stroke="#2b3138" stroke-width="1"/>
<rect x="991.3" y="958.3" width="11.4" height="8.3" rx="0.8" fill="#a4c0e3" stroke="#1d3a6e" stroke-width="0.9"/>
<path d="M994.5,968.5 V970 H993.5 Q993,971.3 994,971.3 H1000 Q1001,971.3 1000.5,970 H999.5 V968.5" fill="#f8f8f8" stroke="#2b3138" stroke-width="0.8"/>
<path d="M1007.1,961.9 H1012.9 L1010,965.6 Z" fill="#222"/>
</g>
<!-- grid -->
<g>
<defs><linearGradient id="gg" x1="0" y1="0" x2="0" y2="1"><stop offset="0" stop-color="#3e4248"/><stop offset="1" stop-color="#6e747c"/></linearGradient></defs>
<rect x="1020" y="956.1" width="15.9" height="15.6" rx="1" fill="url(#gg)"/>
<g fill="#fff">
<rect x="1021.3" y="957.4" width="2" height="2"/><rect x="1024.3" y="957.4" width="2" height="2"/><rect x="1027.3" y="957.4" width="2" height="2"/><rect x="1030.3" y="957.4" width="2" height="2"/><rect x="1033.3" y="957.4" width="2" height="2"/>
<rect x="1021.3" y="960.4" width="2" height="2"/><rect x="1024.3" y="960.4" width="2" height="2"/><rect x="1027.3" y="960.4" width="2" height="2"/><rect x="1030.3" y="960.4" width="2" height="2"/><rect x="1033.3" y="960.4" width="2" height="2"/>
<rect x="1021.3" y="963.4" width="2" height="2"/><rect x="1024.3" y="963.4" width="2" height="2"/><rect x="1027.3" y="963.4" width="2" height="2"/><rect x="1030.3" y="963.4" width="2" height="2"/><rect x="1033.3" y="963.4" width="2" height="2"/>
<rect x="1021.3" y="966.4" width="2" height="2" opacity="0.9"/><rect x="1024.3" y="966.4" width="2" height="2" opacity="0.9"/><rect x="1027.3" y="966.4" width="2" height="2" opacity="0.9"/><rect x="1030.3" y="966.4" width="2" height="2" opacity="0.9"/><rect x="1033.3" y="966.4" width="2" height="2" opacity="0.9"/>
<rect x="1021.3" y="969.3" width="2" height="1.8" opacity="0.8"/><rect x="1024.3" y="969.3" width="2" height="1.8" opacity="0.8"/><rect x="1027.3" y="969.3" width="2" height="1.8" opacity="0.8"/><rect x="1030.3" y="969.3" width="2" height="1.8" opacity="0.8"/><rect x="1033.3" y="969.3" width="2" height="1.8" opacity="0.8"/>
</g>
<path d="M1038.3,961.9 H1044 L1041.15,965.6 Z" fill="#222"/>
</g>
<!-- viewports -->
<g fill="#a4c0e3" stroke="#1d3a6e" stroke-width="1">
<rect x="1051.6" y="957.5" width="7" height="6" rx="0.8"/><rect x="1058.8" y="957.5" width="7" height="6" rx="0.8"/>
<rect x="1051.6" y="963.6" width="7" height="6" rx="0.8"/><rect x="1058.8" y="963.6" width="7" height="6" rx="0.8"/>
</g>
<path d="M1069,961.9 H1074.8 L1071.9,965.6 Z" fill="#222"/>
</svg>

</div>
<div id="bot" class="a">
<svg class="a" style="left:0;top:0" width="1920" height="27" viewBox="0 982 1920 27">

<!-- playback -->
<g fill="#666">
<rect x="10.9" y="1001.2" width="2.1" height="8"/><path d="M13.9,1006 L21.9,1001 V1011 Z"/>
<path d="M35.7,1006 L44.9,1001 V1011 Z"/><rect x="46.3" y="1004.8" width="1.9" height="5"/>
<path d="M61.3,999.1 L72.6,1006 L61.3,1012.9 Z"/>
<rect x="85" y="1005" width="1.8" height="5"/><path d="M88.3,1001 L97.4,1006 L88.3,1011 Z"/>
<path d="M110.9,1001 L119.6,1006 L110.9,1011 Z"/><rect x="120" y="1001" width="2" height="8"/>
</g>
<g transform="translate(146,998.5)">
<rect x="0.5" y="0.5" width="14" height="14" fill="none" stroke="#777" stroke-width="0.8"/>
<rect x="0.5" y="0" width="14" height="1.6" fill="#c8c8c8"/>
<circle cx="0.5" cy="0.8" r="1" fill="#1a8fe0"/><circle cx="14.5" cy="0.8" r="1" fill="#1a8fe0"/>
<path d="M5,3.5 H10 M4,4.5 V9.5 M5,10 Q9,9 10.5,4.5" fill="none" stroke="#777" stroke-width="0.7"/>
<circle cx="4" cy="3.5" r="0.9" fill="#1a8fe0"/><circle cx="10.5" cy="3.5" r="0.9" fill="#1a8fe0"/><circle cx="4" cy="10" r="0.9" fill="#1a8fe0"/>
<circle cx="14" cy="8.5" r="1.7" fill="#ee3333"/><circle cx="12" cy="10" r="1.3" fill="#f0a020"/>
</g><g transform="translate(170.3,998)">
<polygon points="0,3.2 9,3.2 9,15 0,15" fill="#6ab0e6"/>
<polygon points="0,3.2 3,0 12.2,0 9,3.2" fill="#8ccbf8"/>
<polygon points="9,3.2 12.2,0 12.2,15 9,15" fill="#4b95d1"/>
<path d="M14.3,15 V2" stroke="#333" stroke-width="0.9"/><path d="M13,3 L14.3,0.3 L15.6,3 Z" fill="#333"/>
</g><g transform="translate(194,998.5)">
<rect x="0.5" y="0.5" width="14" height="14" fill="none" stroke="#777" stroke-width="0.8"/>
<rect x="0.5" y="0" width="14" height="1.6" fill="#c8c8c8"/>
<circle cx="0.5" cy="0.8" r="1" fill="#1a8fe0"/><circle cx="14.5" cy="0.8" r="1" fill="#1a8fe0"/>
<path d="M5,3.5 H10 M4,4.5 V9.5 M5,10 Q9,9 10.5,4.5" fill="none" stroke="#777" stroke-width="0.7"/>
<circle cx="4" cy="3.5" r="0.9" fill="#1a8fe0"/><circle cx="10.5" cy="3.5" r="0.9" fill="#1a8fe0"/><circle cx="4" cy="10" r="0.9" fill="#1a8fe0"/>
<circle cx="14" cy="8.5" r="1.7" fill="#ee3333"/><circle cx="12" cy="10" r="1.3" fill="#f0a020"/>
</g><g transform="translate(218.3,998)">
<polygon points="0,3.2 9,3.2 9,15 0,15" fill="#6ab0e6"/>
<polygon points="0,3.2 3,0 12.2,0 9,3.2" fill="#8ccbf8"/>
<polygon points="9,3.2 12.2,0 12.2,15 9,15" fill="#4b95d1"/>
<path d="M14.3,15 V2" stroke="#333" stroke-width="0.9"/><path d="M13,3 L14.3,0.3 L15.6,3 Z" fill="#333"/>
</g>
<g transform="translate(242,998)">
<path d="M0.5,3.5 H7 Q12.5,4 12.5,10 V15 H0.5 Z" fill="#d9d9d9"/>
<path d="M0.5,3.5 L4,0 H9 L7,3.5 Z" fill="#f4f4f4"/>
<path d="M7,3.5 L9,0 Q15.5,1 15.8,6.5 L12.5,10 Q12.5,4 7,3.5 Z" fill="#6ab0e6"/>
<path d="M9,0 H4 L0.5,3.5 V15 M12.5,10 L15.8,6.5 V15" fill="none" stroke="#777" stroke-width="0.8"/>
</g><g transform="translate(266,998.5)">
<rect x="0.5" y="0.5" width="14" height="14" fill="none" stroke="#777" stroke-width="0.8"/>
<rect x="0.5" y="0" width="14" height="1.6" fill="#c8c8c8"/>
<circle cx="0.5" cy="0.8" r="1" fill="#1a8fe0"/><circle cx="14.5" cy="0.8" r="1" fill="#1a8fe0"/>
<path d="M5,3.5 H10 M4,4.5 V9.5 M5,10 Q9,9 10.5,4.5" fill="none" stroke="#777" stroke-width="0.7"/>
<circle cx="4" cy="3.5" r="0.9" fill="#1a8fe0"/><circle cx="10.5" cy="3.5" r="0.9" fill="#1a8fe0"/><circle cx="4" cy="10" r="0.9" fill="#1a8fe0"/>
<circle cx="14" cy="8.5" r="1.7" fill="#ee3333"/><circle cx="12" cy="10" r="1.3" fill="#f0a020"/>
</g><g transform="translate(290.3,998)">
<polygon points="0,3.2 9,3.2 9,15 0,15" fill="#6ab0e6"/>
<polygon points="0,3.2 3,0 12.2,0 9,3.2" fill="#8ccbf8"/>
<polygon points="9,3.2 12.2,0 12.2,15 9,15" fill="#4b95d1"/>
<path d="M14.3,15 V2" stroke="#333" stroke-width="0.9"/><path d="M13,3 L14.3,0.3 L15.6,3 Z" fill="#333"/>
</g><g transform="translate(314.3,998)">
<polygon points="0,3.2 9,3.2 9,15 0,15" fill="#6ab0e6"/>
<polygon points="0,3.2 3,0 12.2,0 9,3.2" fill="#8ccbf8"/>
<polygon points="9,3.2 12.2,0 12.2,15 9,15" fill="#4b95d1"/>
<path d="M14.3,15 V2" stroke="#333" stroke-width="0.9"/><path d="M13,3 L14.3,0.3 L15.6,3 Z" fill="#333"/>
</g>
<g transform="translate(338,998.5)">
<rect x="0.5" y="0.5" width="14" height="14" fill="none" stroke="#777" stroke-width="0.8"/>
<rect x="0.5" y="0" width="14" height="1.6" fill="#c8c8c8"/>
<circle cx="0.5" cy="0.8" r="1" fill="#1a8fe0"/><circle cx="14.5" cy="0.8" r="1" fill="#1a8fe0"/>
<path d="M5,3.5 H10 M4,4.5 V9.5 M5,10 Q9,9 10.5,4.5" fill="none" stroke="#777" stroke-width="0.7"/>
<circle cx="4" cy="3.5" r="0.9" fill="#1a8fe0"/><circle cx="10.5" cy="3.5" r="0.9" fill="#1a8fe0"/><circle cx="4" cy="10" r="0.9" fill="#1a8fe0"/>
<circle cx="14" cy="8.5" r="1.7" fill="#ee3333"/><circle cx="12" cy="10" r="1.3" fill="#f0a020"/>
</g><g transform="translate(362,998.5)">
<rect x="0.5" y="0.5" width="14" height="14" fill="none" stroke="#777" stroke-width="0.8"/>
<rect x="0.5" y="0" width="14" height="1.6" fill="#c8c8c8"/>
<circle cx="0.5" cy="0.8" r="1" fill="#1a8fe0"/><circle cx="14.5" cy="0.8" r="1" fill="#1a8fe0"/>
<path d="M5,3.5 H10 M4,4.5 V9.5 M5,10 Q9,9 10.5,4.5" fill="none" stroke="#777" stroke-width="0.7"/>
<circle cx="4" cy="3.5" r="0.9" fill="#1a8fe0"/><circle cx="10.5" cy="3.5" r="0.9" fill="#1a8fe0"/><circle cx="4" cy="10" r="0.9" fill="#1a8fe0"/>
<circle cx="14" cy="8.5" r="1.7" fill="#ee3333"/><circle cx="12" cy="10" r="1.3" fill="#f0a020"/>
</g><g transform="translate(386,998)">
<polygon points="0,3.2 9,3.2 9,15 0,15" fill="#6ab0e6"/>
<polygon points="0,3.2 3,0 12.2,0 9,3.2" fill="#8ccbf8"/>
<polygon points="9,3.2 12.2,0 12.2,15 9,15" fill="#4b95d1"/>
<path d="M14.3,15 V2" stroke="#333" stroke-width="0.9"/><path d="M13,3 L14.3,0.3 L15.6,3 Z" fill="#333"/>
</g><g transform="translate(410.3,998)">
<polygon points="0,3.2 9,3.2 9,15 0,15" fill="#6ab0e6"/>
<polygon points="0,3.2 3,0 12.2,0 9,3.2" fill="#8ccbf8"/>
<polygon points="9,3.2 12.2,0 12.2,15 9,15" fill="#4b95d1"/>
<path d="M14.3,15 V2" stroke="#333" stroke-width="0.9"/><path d="M13,3 L14.3,0.3 L15.6,3 Z" fill="#333"/>
</g>
<g transform="translate(434,998.5)">
<rect x="0.5" y="0.5" width="14" height="14" fill="none" stroke="#777" stroke-width="0.8"/>
<rect x="0.5" y="0" width="14" height="1.6" fill="#c8c8c8"/>
<circle cx="0.5" cy="0.8" r="1" fill="#1a8fe0"/><circle cx="14.5" cy="0.8" r="1" fill="#1a8fe0"/>
<path d="M5,3.5 H10 M4,4.5 V9.5 M5,10 Q9,9 10.5,4.5" fill="none" stroke="#777" stroke-width="0.7"/>
<circle cx="4" cy="3.5" r="0.9" fill="#1a8fe0"/><circle cx="10.5" cy="3.5" r="0.9" fill="#1a8fe0"/><circle cx="4" cy="10" r="0.9" fill="#1a8fe0"/>
<circle cx="14" cy="8.5" r="1.7" fill="#ee3333"/><circle cx="12" cy="10" r="1.3" fill="#f0a020"/>
</g><g transform="translate(458.4,998)">
<polygon points="0,3.2 9,3.2 9,15 0,15" fill="#6ab0e6"/>
<polygon points="0,3.2 3,0 12.2,0 9,3.2" fill="#8ccbf8"/>
<polygon points="9,3.2 12.2,0 12.2,15 9,15" fill="#4b95d1"/>
<path d="M14.3,15 V2" stroke="#333" stroke-width="0.9"/><path d="M13,3 L14.3,0.3 L15.6,3 Z" fill="#333"/>
</g><g transform="translate(482,998.5)">
<rect x="0.5" y="0.5" width="14" height="14" fill="none" stroke="#777" stroke-width="0.8"/>
<rect x="0.5" y="0" width="14" height="1.6" fill="#c8c8c8"/>
<circle cx="0.5" cy="0.8" r="1" fill="#1a8fe0"/><circle cx="14.5" cy="0.8" r="1" fill="#1a8fe0"/>
<path d="M5,3.5 H10 M4,4.5 V9.5 M5,10 Q9,9 10.5,4.5" fill="none" stroke="#777" stroke-width="0.7"/>
<circle cx="4" cy="3.5" r="0.9" fill="#1a8fe0"/><circle cx="10.5" cy="3.5" r="0.9" fill="#1a8fe0"/><circle cx="4" cy="10" r="0.9" fill="#1a8fe0"/>
<circle cx="14" cy="8.5" r="1.7" fill="#ee3333"/><circle cx="12" cy="10" r="1.3" fill="#f0a020"/>
</g><g transform="translate(506.5,998)">
<polygon points="0,3.2 9,3.2 9,15 0,15" fill="#6ab0e6"/>
<polygon points="0,3.2 3,0 12.2,0 9,3.2" fill="#8ccbf8"/>
<polygon points="9,3.2 12.2,0 12.2,15 9,15" fill="#4b95d1"/>
<path d="M14.3,15 V2" stroke="#333" stroke-width="0.9"/><path d="M13,3 L14.3,0.3 L15.6,3 Z" fill="#333"/>
</g>
<g transform="translate(530,998.5)">
<rect x="0.5" y="0.5" width="14" height="14" fill="none" stroke="#777" stroke-width="0.8"/>
<rect x="0.5" y="0" width="14" height="1.6" fill="#c8c8c8"/>
<circle cx="0.5" cy="0.8" r="1" fill="#1a8fe0"/><circle cx="14.5" cy="0.8" r="1" fill="#1a8fe0"/>
<path d="M5,3.5 H10 M4,4.5 V9.5 M5,10 Q9,9 10.5,4.5" fill="none" stroke="#777" stroke-width="0.7"/>
<circle cx="4" cy="3.5" r="0.9" fill="#1a8fe0"/><circle cx="10.5" cy="3.5" r="0.9" fill="#1a8fe0"/><circle cx="4" cy="10" r="0.9" fill="#1a8fe0"/>
<circle cx="14" cy="8.5" r="1.7" fill="#ee3333"/><circle cx="12" cy="10" r="1.3" fill="#f0a020"/>
</g><g transform="translate(554.5,998)">
<polygon points="0,3.2 9,3.2 9,15 0,15" fill="#6ab0e6"/>
<polygon points="0,3.2 3,0 12.2,0 9,3.2" fill="#8ccbf8"/>
<polygon points="9,3.2 12.2,0 12.2,15 9,15" fill="#4b95d1"/>
<path d="M14.3,15 V2" stroke="#333" stroke-width="0.9"/><path d="M13,3 L14.3,0.3 L15.6,3 Z" fill="#333"/>
</g><g transform="translate(578.2,998.5)">
<rect x="0.5" y="0.5" width="14" height="14" fill="none" stroke="#777" stroke-width="0.8"/>
<rect x="0.5" y="0" width="14" height="1.6" fill="#c8c8c8"/>
<circle cx="0.5" cy="0.8" r="1" fill="#1a8fe0"/><circle cx="14.5" cy="0.8" r="1" fill="#1a8fe0"/>
<path d="M5,3.5 H10 M4,4.5 V9.5 M5,10 Q9,9 10.5,4.5" fill="none" stroke="#777" stroke-width="0.7"/>
<circle cx="4" cy="3.5" r="0.9" fill="#1a8fe0"/><circle cx="10.5" cy="3.5" r="0.9" fill="#1a8fe0"/><circle cx="4" cy="10" r="0.9" fill="#1a8fe0"/>
<circle cx="14" cy="8.5" r="1.7" fill="#ee3333"/><circle cx="12" cy="10" r="1.3" fill="#f0a020"/>
</g><g transform="translate(602,998)">
<polygon points="0,3.2 9,3.2 9,15 0,15" fill="#6ab0e6"/>
<polygon points="0,3.2 3,0 12.2,0 9,3.2" fill="#8ccbf8"/>
<polygon points="9,3.2 12.2,0 12.2,15 9,15" fill="#4b95d1"/>
<path d="M14.3,15 V2" stroke="#333" stroke-width="0.9"/><path d="M13,3 L14.3,0.3 L15.6,3 Z" fill="#333"/>
</g>
<path d="M616.1,991.8 H627.6 V994.5 L623,999.5 V1009 H621 V999.5 L616.1,994.5 Z" fill="#666"/>
<!-- gear -->
<g transform="translate(1898.5,1006.3)" fill="#777">
<circle r="5.5"/>
<g><rect x="-1.3" y="-7.5" width="2.6" height="15"/><rect x="-7.5" y="-1.3" width="15" height="2.6"/><rect x="-1.3" y="-7.5" width="2.6" height="15" transform="rotate(45)"/><rect x="-1.3" y="-7.5" width="2.6" height="15" transform="rotate(-45)"/></g>
<circle r="2.5" fill="#f2f2f2"/>
</g>
</svg>
</div>

</body></html>
